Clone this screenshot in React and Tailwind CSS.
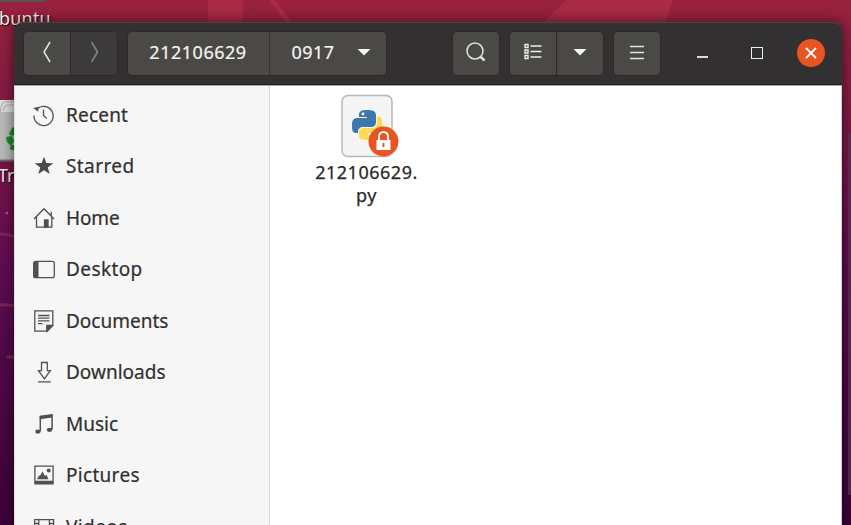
import clsx from 'clsx'

const places = [
  { label: 'Recent',    icon: RecentIcon,    spacing: 'tracking-[0.2px]'  },
  { label: 'Starred',   icon: StarIcon,      spacing: 'tracking-[0.4px]'  },
  { label: 'Home',      icon: HomeIcon,      spacing: 'tracking-[-0.1px]' },
  { label: 'Desktop',   icon: DesktopIcon,   spacing: 'tracking-[0.4px]'  },
  { label: 'Documents', icon: DocumentIcon,  spacing: 'tracking-[0px]'    },
  { label: 'Downloads', icon: DownloadIcon,  spacing: 'tracking-[0px]'    },
  { label: 'Music',     icon: MusicIcon,     spacing: 'tracking-[0px]'    },
  { label: 'Pictures',  icon: PictureIcon,   spacing: 'tracking-[0.3px]'  },
  { label: 'Videos',    icon: VideoIcon,     spacing: 'tracking-[0.4px]'  },
]

// Sidebar icons share a 24x24 box
function Icon({ children }) {
  return (
    <svg className="h-6 w-6 shrink-0" viewBox="0 0 24 24" fill="none" stroke="#505050" strokeWidth="1.3">
      {children}
    </svg>
  )
}

function RecentIcon() {
  return (
    <Icon>
      <path d="M5 6A9.600 9.600 0 1 1 2 12.500" />
      <path d="M1.200 5 6.600 3.800 6.200 8.800Z" fill="#505050" stroke="none" />
      <path d="M11.500 6.500v6l3.200 3" />
    </Icon>
  )
}

function StarIcon() {
  return (
    <Icon>
      <path d="m12 2.8 2.3 6.3 7 .2-5.5 4.2 1.9 6.5-5.7-3.7L6.300 20l1.900-6.500-5.500-4.200 7-.2Z" fill="#4b4b4b" stroke="none" />
    </Icon>
  )
}

function HomeIcon() {
  return (
    <Icon>
      <path d="M2 13 12 2.800 22 13M4.500 11v10.200h15.300V11M19.300 9.500V5.800" />
      <path d="M12.500 14h3.500v7h-3.500Z" fill="#505050" />
    </Icon>
  )
}

function DesktopIcon() {
  return (
    <Icon>
      <rect x="1.700" y="4.300" width="20.600" height="16.400" rx="2" />
      <path d="M2 4.500h4.500v16H2Z" fill="#505050" stroke="none" />
    </Icon>
  )
}

function DocumentIcon() {
  return (
    <Icon>
      <path d="M2.800 1.800h18v14.700l-5.500 5.700H2.800Z" />
      <path d="M6 6.500h11.500M6 9.200h11.500M6 11.900h11.500M6 14.600h4.500" />
      <path d="M20.500 16.500h-5.700v5.700Z" fill="#505050" />
    </Icon>
  )
}

function DownloadIcon() {
  return (
    <Icon>
      <path d="M9.500 2.500h5.800v8.200h3l-5.900 8.100-5.900-8.100h3ZM6 21.800h12.800" />
    </Icon>
  )
}

function MusicIcon() {
  return (
    <Icon>
      <path d="M8.300 18.800V4.300l11.800-1.500v14.700" strokeWidth="1.500" />
      <path d="M7.800 4.300 20.200 2.500v3L7.800 7.300Z" fill="#505050" stroke="none" />
      <ellipse cx="6" cy="19.600" rx="2.700" ry="2.100" fill="#505050" stroke="none" />
      <ellipse cx="17.600" cy="17.800" rx="2.700" ry="2.100" fill="#505050" stroke="none" />
    </Icon>
  )
}

function PictureIcon() {
  return (
    <Icon>
      <path d="M2.900 3.200h18.200v17.600H2.900Z" />
      <path d="M3 17.800h18V21H3ZM5 16.300l2-3.800 1 .3 2.500-4.300 2.500 4.500 1.400-1.200 2.200 4.500Z" fill="#505050" stroke="none" />
      <circle cx="16.700" cy="7.600" r="2" fill="#505050" stroke="none" />
    </Icon>
  )
}

function VideoIcon() {
  return (
    <Icon>
      <path d="M2.600 4v16M6.800 4.400v15.200M17.400 4.400v15.200M21.600 4v16M2.600 4.600h19M2.600 19.400h19M3 8.500h3.500M3 12h3.500M3 15.500h3.500M17.800 8.500h3.500M17.800 12h3.500M17.800 15.500h3.500" />
    </Icon>
  )
}

function Caret() {
  return (
    <svg className="h-2 w-3.5 shrink-0" viewBox="0 0 14 8">
      <path d="M.5 1h13L7 7.500Z" fill="#f5f5f4" />
    </svg>
  )
}

function Wallpaper() {
  return (
    <svg className="absolute inset-0 h-full w-full" viewBox="0 0 851 525">
      <defs>
        <linearGradient id="wall" x1="0" y1="0" x2="0" y2="1">
          <stop offset="0" stopColor="#99223e" />
          <stop offset=".13" stopColor="#8a1e41" />
          <stop offset=".34" stopColor="#731349" />
          <stop offset=".52" stopColor="#5d0c51" />
          <stop offset="1" stopColor="#3b0238" />
        </linearGradient>
      </defs>
      <path d="M0 0h851v525H0Z" fill="url(#wall)" />
      <path d="M208 0h35v22h-35Z" fill="#a92a44" />
      <path d="m269 0 17 22h6L275 0ZM566 0h107l-7 22H544Z" fill="#a92a44" />
      <path d="M0 234q8 0 14 3M0 305q7-1 14 1M7 357h7" fill="none" stroke="#7d255a" strokeWidth="3" />
      <circle cx="7" cy="213" r="1.500" fill="#9d5a89" />
      <path d="M848 133h3v362h-3Z" fill="#5c315b" opacity=".8" />
    </svg>
  )
}

// Launchers that peek out from behind the window
function DesktopIcons() {
  return (
    <div className="absolute inset-0 overflow-hidden text-[18px] leading-5 text-[#eee] [text-shadow:1px_1px_1px_#000]">
      <div className="absolute -left-2 -top-2 h-[10px] w-[56px] rounded-md border-b-2 border-[#555] bg-[#888]" />
      <span className="absolute left-[-1px] top-[8px] tracking-[0.200px]">buntu</span>
      <svg className="absolute left-0 top-[99px] h-[64px] w-5" viewBox="0 0 20 64">
        <path d="M0 1h20v61H0Z" fill="#b9b9b9" />
        <path d="M0 1h20v12H0Z" fill="#dedede" />
        <path d="M0 13 2 5q1-2 3-2h15M3 12l2-5q1-1 3-1h12" fill="none" stroke="#aaa" />
        <path d="m9 35 3-6 4-2v8l-4 2ZM6 38l6-1 2 5-3 5-4-4ZM10 49l1-3h5v5h-5Z" fill="#198c20" />
        <path d="M0 61.500h20" stroke="#686868" strokeWidth="2" />
      </svg>
      <span className="absolute left-[-2px] top-[165px]">Trash</span>
    </div>
  )
}

function HeaderButton({ className, children }) {
  return (
    <button className={clsx('flex h-full items-center justify-center pb-[2px] pr-[1px]', className)}>
      {children}
    </button>
  )
}

function ButtonGroup({ className, children }) {
  return (
    <div className={clsx('flex h-[45px] shrink-0 overflow-hidden rounded-[5px] border border-[#2b2929] bg-[#4b4945]', className)}>
      {children}
    </div>
  )
}

function HeaderBar() {
  return (
    <header className="flex h-[63px] shrink-0 items-center rounded-t-[9px] border-b border-t border-b-[#1d1b1b] border-t-[#494848] bg-[#333031] pb-px pl-[9px] text-[#f4f4f2]">
      <ButtonGroup className="w-[95px]">
        <HeaderButton className="w-[47px] border-r border-[#292727]">
          <svg className="h-6 w-3" viewBox="0 0 12 24" fill="none" stroke="#ddd" strokeWidth="1.600">
            <path d="M9 2 3 12l6 10" />
          </svg>
        </HeaderButton>
        <HeaderButton className="flex-1 bg-[#3c3a3a]">
          <svg className="h-6 w-3" viewBox="0 0 12 24" fill="none" stroke="#858484" strokeWidth="1.600">
            <path d="m3.500 2 6 10-6 10" />
          </svg>
        </HeaderButton>
      </ButtonGroup>

      <ButtonGroup className="ml-[9px] w-[260px] text-[18px] [-webkit-text-stroke:0.2px_#f4f4f2]">
        <HeaderButton className="w-[142px] border-r border-[#333130]">
          <span className="tracking-[0.520px]">212106629</span>
        </HeaderButton>
        <HeaderButton className="flex-1 gap-[22px] pl-[7px]">
          <span className="tracking-[0.500px]">0917</span>
          <Caret />
        </HeaderButton>
      </ButtonGroup>

      <ButtonGroup className="ml-[65px] w-[48px]">
        <HeaderButton className="w-full">
          <svg className="h-6 w-6" viewBox="0 0 24 24" fill="none" stroke="#deded9">
            <circle cx="11" cy="11" r="8" strokeWidth="1.600" />
            <path d="m16.300 16.500 4.200 4" strokeWidth="2.500" />
          </svg>
        </HeaderButton>
      </ButtonGroup>

      <ButtonGroup className="ml-[9px] w-[95px]">
        <HeaderButton className="w-[47px] border-r border-[#292727]">
          <svg className="h-5 w-5" viewBox="0 0 20 20" fill="none" stroke="#eeeeea" strokeWidth="1.400">
            <path d="M2 2.500h3v3H2ZM2 8h3v3H2ZM2 13.500h3v3H2ZM7.500 4H18.500M7.500 9.500H18.500M7.500 15H18.500" />
          </svg>
        </HeaderButton>
        <HeaderButton className="flex-1">
          <Caret />
        </HeaderButton>
      </ButtonGroup>

      <ButtonGroup className="ml-[9px] w-[48px]">
        <HeaderButton className="w-full">
          <svg className="h-4 w-4" viewBox="0 0 16 16" fill="none" stroke="#e5e5e1" strokeWidth="1.500">
            <path d="M1 2.500h14M1 8.500h14M1 14.500h14" />
          </svg>
        </HeaderButton>
      </ButtonGroup>

      <div className="ml-[36px] flex items-center">
        <button className="flex h-7 w-3 items-center">
          <span className="mt-[7px] h-[2px] w-[11px] bg-[#deddda]" />
        </button>
        <button className="ml-[42px] h-[12px] w-[12px] border-[1.500px] border-[#eee]" />
        <button className="ml-[34px] flex h-[28px] w-[28px] items-center justify-center rounded-full bg-[#e95420]">
          <svg className="h-3 w-3" viewBox="0 0 12 12" fill="none" stroke="#fff" strokeWidth="1.900">
            <path d="m1 1 10 10M11 1 1 11" />
          </svg>
        </button>
      </div>
    </header>
  )
}

function Sidebar() {
  return (
    <nav className="w-[256px] shrink-0 border-l border-r border-l-[#ddd] border-r-[#d5d5d5] bg-[#f6f6f6] pt-[3px]">
      {places.map((p) => (
        <div key={p.label} className="flex h-[51.500px] items-center gap-[10px] pl-[17px]">
          <p.icon />
          <span className={clsx('text-[19px] text-[#303030] [-webkit-text-stroke:0.2px_#303030]', p.spacing)}>
            {p.label}
          </span>
        </div>
      ))}
    </nav>
  )
}

function PythonFile() {
  return (
    <div className="flex w-[121px] flex-col items-center">
      <svg className="h-[66px] w-[62px]" viewBox="-1 0 62 66" overflow="visible">
        <rect x="5" y="2.500" width="50" height="61" rx="6" fill="#f5f5f5" stroke="#b7b7b7" strokeWidth="1.500" />
        <path d="M22 22c0-4 3-5 8-5s9 1 9 5v7c0 3-2 5-5 5h-8c-3 0-5 2-5 5v1h-2c-4 0-4-4-4-8 0-5 2-7 5-7h10v-1h-8Z" fill="#3c78ab" />
        <path d="M40 23.500h1c4 0 4.500 4 4.500 8.500 0 5-2 8-5 8H31v2h8v1c0 3-3 4-8 4s-9-1-9-4v-4c0-3 2-4 5-4h8c3 0 5-2 5-5Z" fill="#ffd954" />
        <circle cx="26" cy="21" r="1.400" fill="#fff" />
        <circle cx="46.500" cy="48.500" r="15" fill="#e95420" />
        <path d="M42 47v-3.500a4.500 4.500 0 0 1 9 0V47" fill="none" stroke="#fff" strokeWidth="2" />
        <path d="M39.500 47h14v10h-14Z" fill="#fff" />
        <path d="M45.500 50h2v4h-2Z" fill="#e95420" />
      </svg>
      <p className="mt-[2px] text-center text-[18px] leading-[23px] tracking-[0.520px] text-[#292929] [-webkit-text-stroke:0.25px_#292929]">
        212106629.
        <br />
        py
      </p>
    </div>
  )
}

function App() {
  return (
    <div className="relative h-[525px] w-[851px] overflow-hidden font-['Noto_Sans','Open_Sans',sans-serif]">
      <Wallpaper />
      <DesktopIcons />
      <main className="absolute left-[14px] top-[22px] flex h-[503px] w-[828px] flex-col rounded-t-[9px] shadow-[0_0_12px_2px_rgba(0,0,0,0.45)]">
        <HeaderBar />
        <div className="flex min-h-0 flex-1 overflow-hidden border-t border-[#aaa]">
          <Sidebar />
          <section className="flex-1 border-r border-[#ccc] bg-white pl-[36px] pt-[7px]">
            <PythonFile />
          </section>
        </div>
      </main>
    </div>
  )
}

export default App
